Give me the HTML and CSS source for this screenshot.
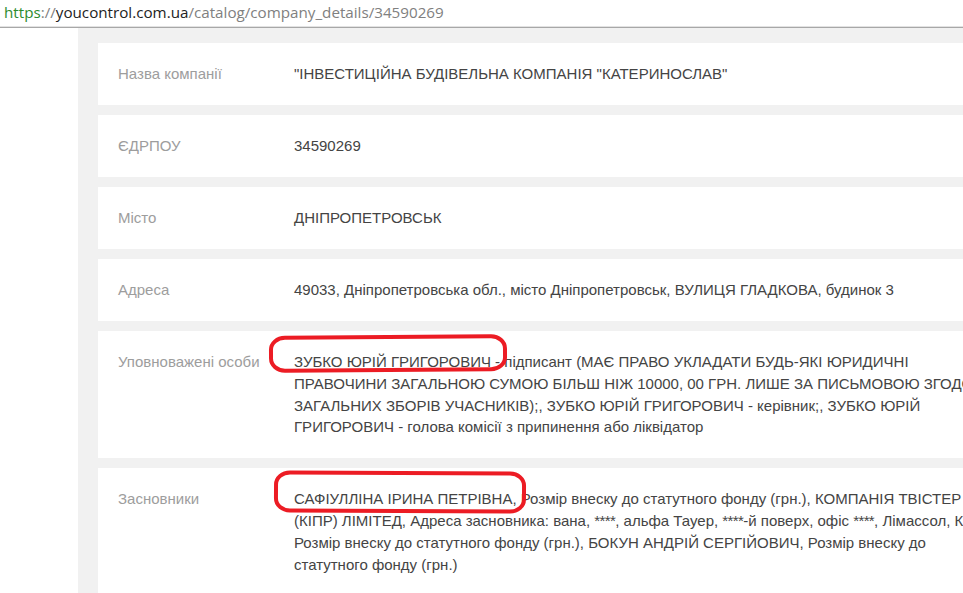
FILE: index.html
```html
<!DOCTYPE html>
<html lang="uk">
<head>
<meta charset="utf-8">
<title>YouControl</title>
<link rel="stylesheet" href="styles.css">
</head>
<body>
<div class="urlbar"><span class="scheme">https</span><span class="sep">://</span><span class="host">youcontrol.com.ua</span><span class="path">/catalog/company_details/34590269</span></div>
<div class="page">
  <div class="panel">
    <div class="card"><div class="label">Назва компанії</div><div class="value">"ІНВЕСТИЦІЙНА БУДІВЕЛЬНА КОМПАНІЯ "КАТЕРИНОСЛАВ"</div></div>
    <div class="card"><div class="label">ЄДРПОУ</div><div class="value">34590269</div></div>
    <div class="card"><div class="label">Місто</div><div class="value">ДНІПРОПЕТРОВСЬК</div></div>
    <div class="card"><div class="label">Адреса</div><div class="value">49033, Дніпропетровська обл., місто Дніпропетровськ, ВУЛИЦЯ ГЛАДКОВА, будинок 3</div></div>
    <div class="card"><div class="label">Уповноважені особи</div><div class="value">ЗУБКО ЮРІЙ ГРИГОРОВИЧ - підписант (МАЄ ПРАВО УКЛАДАТИ БУДЬ-ЯКІ ЮРИДИЧНІ ПРАВОЧИНИ ЗАГАЛЬНОЮ СУМОЮ БІЛЬШ НІЖ 10000, 00 ГРН. ЛИШЕ ЗА ПИСЬМОВОЮ ЗГОДОЮ ЗАГАЛЬНИХ ЗБОРІВ УЧАСНИКІВ);, ЗУБКО ЮРІЙ ГРИГОРОВИЧ - керівник;, ЗУБКО ЮРІЙ ГРИГОРОВИЧ - голова комісії з припинення або ліквідатор</div></div>
    <div class="card"><div class="label">Засновники</div><div class="value">САФІУЛЛІНА ІРИНА ПЕТРІВНА, Розмір внеску до статутного фонду (грн.), КОМПАНІЯ ТВІСТЕР (КІПР) ЛІМІТЕД, Адреса засновника: вана, <span class="mask">****</span>, альфа Тауер, <span class="mask">****</span>-й поверх, офіс <span class="mask">****</span>, Лімассол, Кіпр, Розмір внеску до статутного фонду (грн.), БОКУН АНДРІЙ СЕРГІЙОВИЧ, Розмір внеску до статутного фонду (грн.)</div></div>
  </div>
</div>
<div class="mark mark-one"></div>
<div class="mark mark-two"></div>
</body>
</html>
```
FILE: styles.css
```css
html, body {
  margin: 0;
  padding: 0;
  overflow: hidden;
  background: #ffffff;
}
body {
  width: 963px;
  height: 593px;
  position: relative;
}
.urlbar {
  height: 27px;
  box-sizing: border-box;
  padding: 1px 0 0 4px;
  font-family: "Open Sans", "Noto Sans", sans-serif;
  font-size: 15.2px;
  line-height: 22px;
  border-bottom: 1px solid #e2e2e2;
  box-shadow: 0 1px 0 #a8a8a8;
  white-space: nowrap;
}
.scheme { color: #2e8b2e; }
.sep, .path { color: #808080; }
.host { color: #222222; }
.page {
  margin-top: 1px;
  padding-left: 78px;
}
.panel {
  background: #f1f1f1;
  padding: 15px 0 0 20px;
  width: 1100px;
  height: 600px;
}
.card {
  background: #ffffff;
  display: flex;
  padding: 20px 0 20px 20px;
  margin-bottom: 10.25px;
  font-family: "Liberation Sans", Arial, sans-serif;
  font-size: 15px;
  line-height: 21.75px;
}
.label {
  width: 176px;
  flex: none;
  color: #9d9d9d;
}
.value {
  width: 701px;
  flex: none;
  color: #444444;
}
.mask {
  letter-spacing: -0.6px;
}
.mark {
  position: absolute;
  border: 4px solid #ec1c24;
  border-radius: 16px / 14px;
  box-sizing: border-box;
}
.mark-one {
  left: 269px;
  top: 335px;
  width: 238px;
  height: 37px;
  transform: rotate(-0.4deg);
}
.mark-two {
  left: 274px;
  top: 471px;
  width: 252px;
  height: 42px;
  transform: rotate(0.3deg);
}
```
